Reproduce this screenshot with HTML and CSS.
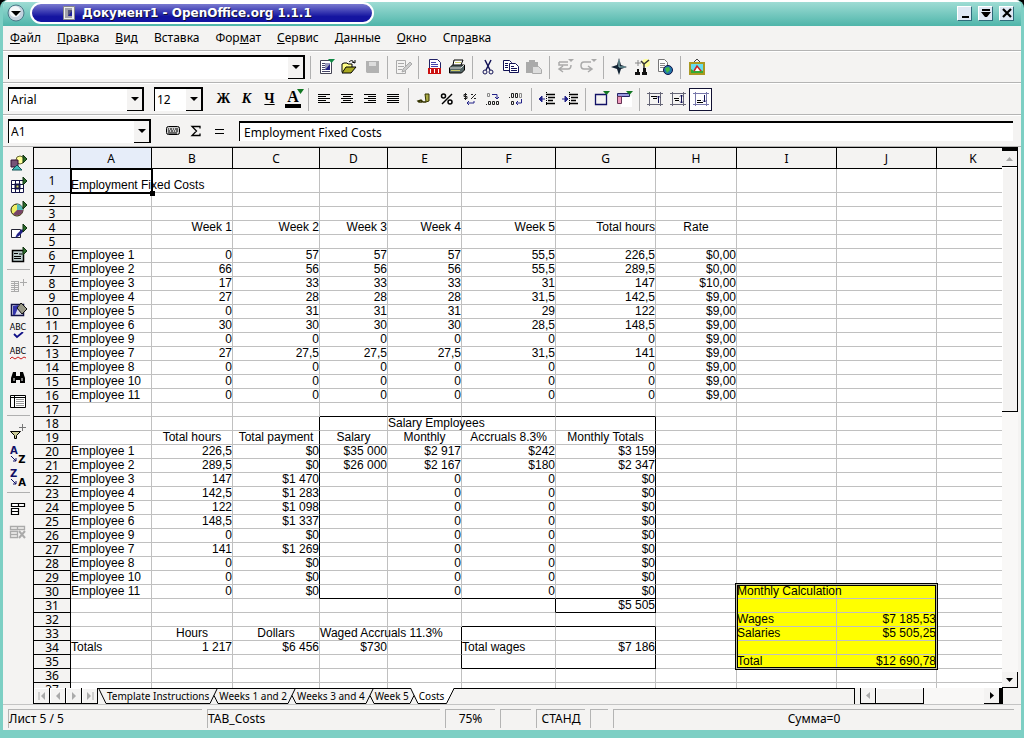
FILE: index.html
```html
<!DOCTYPE html>
<html lang="ru">
<head>
<meta charset="utf-8">
<title>Документ1 - OpenOffice.org 1.1.1</title>
<link rel="stylesheet" href="styles.css">
</head>
<body>
<div class="window">
  <header class="titlebar">
    <button class="orb" aria-label="Меню окна"><svg width="18" height="18" viewBox="0 0 18 18"><circle cx="9" cy="9" r="8" fill="#c4d2de" stroke="#4a7a88"/><circle cx="8" cy="7.500" r="5.500" fill="#f4f8fa"/><path d="M4 7h10l-5 5z" fill="#000"/></svg></button>
    <div class="caption">
      <svg width="12" height="14" viewBox="0 0 12 14"><path d="M.5.5h11v13H.5z" fill="#eee" stroke="#888"/><path d="M2 3h7M2 5h3M2 7h3M2 9h3M2 11h7" stroke="#556"/><path d="M5 4h4v6H5z" fill="#557"/><path d="M5 10l4-5v5z" fill="#229"/></svg>
      <h1>Документ1 - OpenOffice.org 1.1.1</h1>
    </div>
    <div class="winbuttons">
      <button class="winbtn" aria-label="Свернуть"><svg width="12" height="12" viewBox="0 0 12 12"><path d="M3 10h7" stroke="#000" stroke-width="2"/></svg></button>
      <button class="winbtn" aria-label="Развернуть"><svg width="12" height="12" viewBox="0 0 12 12"><path d="M2 2h8v2H2zM1 5h10l-4 5H5z"/></svg></button>
      <button class="winbtn" aria-label="Закрыть"><svg width="12" height="12" viewBox="0 0 12 12"><path d="M2 2l8 8M10 2l-8 8" stroke="#000" stroke-width="2.200"/></svg></button>
    </div>
  </header>

  <nav class="menubar">
    <button><u>Ф</u>айл</button><button><u>П</u>равка</button><button><u>В</u>ид</button><button>Вставка</button><button>Фор<u>м</u>ат</button><button><u>С</u>ервис</button><button><u>Д</u>анные</button><button><u>О</u>кно</button><button>Спр<u>а</u>вка</button>
  </nav>

  <div class="toolbar">
    <div class="combo combo-url"><select aria-label="Адрес"><option></option></select><span class="drop"></span></div>
    <i class="sep"></i>
    <button class="tool" aria-label="Создать"><svg width="18" height="18" viewBox="0 0 18 18"><path d="M3.500 2.500h11v13h-11z" fill="#fff" stroke="#445"/><path d="M5 5.500h4M5 7.500h3M5 9.500h3M5 11.500h3M5 13.500h8" stroke="#446"/><path d="M8 5h5v7H8z" fill="#99b"/><path d="M8 12l5-6v6z" fill="#228"/><path d="M11 1h7l-3.500 4z" fill="#184"/></svg></button>
    <button class="tool" aria-label="Открыть"><svg width="18" height="18" viewBox="0 0 18 18"><path d="M2 14V6l2-1h3l1 1h4v3" fill="#ff8" stroke="#000"/><path d="M2 15l4-6h10l-5 6z" fill="#aa2" stroke="#000"/><path d="M9 4c2-2 4-2 5 1M12 4l3 1V2" fill="none" stroke="#000"/></svg></button>
    <button class="tool" aria-label="Сохранить"><svg width="18" height="18" viewBox="0 0 18 18"><path d="M3 3h13v12H4l-1-1z" fill="#b2b2b2"/><path d="M6 4h7v4H6z" fill="#ddd"/></svg></button>
    <i class="sep"></i>
    <button class="tool" aria-label="Правка файла"><svg width="18" height="18" viewBox="0 0 18 18" fill="none" stroke="#aaa"><path d="M2.500 2.500h9v13h-9zM4 5.500h6M4 8.500h6M4 11.500h4"/><path d="M16 4l-7 7-1 3 3-1 7-7z" fill="#ccc"/></svg></button>
    <i class="sep"></i>
    <button class="tool" aria-label="Экспорт в PDF"><svg width="18" height="18" viewBox="0 0 18 18"><path d="M4.500 1.500h8l3 3v11h-11z" fill="#fff" stroke="#226"/><path d="M6 4.500h5M6 6.500h7M6 8.500h7" stroke="#44a"/><path d="M3 10h13v6H3z" fill="#c11"/><path d="M5.500 11v4M9.500 11v4M13.500 11v4" stroke="#fff"/></svg></button>
    <button class="tool" aria-label="Печать"><svg width="18" height="18" viewBox="0 0 18 18"><path d="M5 7l1-5h9l-2 5" fill="#fff" stroke="#000"/><path d="M1.500 10l3-3h12v5l-3 3h-12z" fill="#566" stroke="#000"/><path d="M7 4.500h6M3 12.500h9" stroke="#cc6"/><path d="M2 10h11l3-3" stroke="#ddd" fill="none"/></svg></button>
    <i class="sep"></i>
    <button class="tool" aria-label="Вырезать"><svg width="18" height="18" viewBox="0 0 18 18" fill="none" stroke="#115"><path d="M6 2l5 10M12 2L7 12" stroke-width="1.500"/><circle cx="6" cy="14" r="2"/><circle cx="12" cy="14" r="2"/></svg></button>
    <button class="tool" aria-label="Копировать"><svg width="18" height="18" viewBox="0 0 18 18" fill="#fff" stroke="#115"><path d="M1.500 2.500h6l2 2v8h-8z"/><path d="M7.500 5.500h6l3 3v6h-9z"/><path d="M3 5.500h3M3 7.500h3M3 9.500h3M9 8.500h3M9 10.500h6M9 12.500h6"/></svg></button>
    <button class="tool" aria-label="Вставить"><svg width="18" height="18" viewBox="0 0 18 18"><path d="M1 4h12v11H1zM4 2h6v3H4z" fill="#aaa"/><path d="M7.500 8.500h6l3 3v4h-9z" fill="#ddd" stroke="#aaa"/></svg></button>
    <i class="sep"></i>
    <button class="tool" aria-label="Отменить"><svg width="18" height="18" viewBox="0 0 18 18" fill="none" stroke="#aaa" stroke-width="1.500"><path d="M12 4H3M15 7q0 4-3 4H4M7 8l-4 3 4 3M3 4v3h9"/><path d="M12 1h6l-3 3z" fill="#aaa" stroke="none"/></svg></button>
    <button class="tool" aria-label="Вернуть"><svg width="18" height="18" viewBox="0 0 18 18" fill="none" stroke="#aaa" stroke-width="1.500"><path d="M12 4H5Q2 4 2 7.500T5 11h8M9 8l4 3-4 3"/><path d="M12 1h6l-3 3z" fill="#aaa" stroke="none"/></svg></button>
    <i class="sep"></i>
    <button class="tool" aria-label="Навигатор"><svg width="18" height="18" viewBox="0 0 18 18"><path d="M9 0l2 7 6 2-6 2-2 6-2-6-6-2 6-2z" fill="#123"/><path d="M9 9V2M9 9h6" stroke="#9cc"/></svg></button>
    <button class="tool" aria-label="Стилист"><svg width="18" height="18" viewBox="0 0 18 18"><circle cx="13" cy="5" r="4" fill="#ff9"/><path d="M5 2v6M2 5h6" stroke="#888"/><path d="M8 3l3 3 5-4M11 6v4" stroke="#333" stroke-width="1.500" fill="none"/><path d="M2 14h5v3H2zM9 14h5v3H9zM4 11h2v3H4zM10 10h3v4h-3z" fill="#111"/></svg></button>
    <button class="tool" aria-label="Гиперссылка"><svg width="18" height="18" viewBox="0 0 18 18"><path d="M2.500 1.500h6l3 3v9h-9z" fill="#fff" stroke="#777"/><path d="M4 5.500h5M4 7.500h5M4 9.500h4" stroke="#888"/><circle cx="12" cy="12" r="4.500" fill="#27a" stroke="#114"/><path d="M9 10l4-1 1 3-3 3z" fill="#4b4"/></svg></button>
    <i class="sep"></i>
    <button class="tool" aria-label="Галерея"><svg width="18" height="18" viewBox="0 0 18 18"><path d="M6 5l4-4 4 4" fill="none" stroke="#444"/><path d="M3 5h14v11H3z" fill="#6de" stroke="#a92" stroke-width="2"/><path d="M4 15v-4l3 2 3-4 3 3 3 1v2z" fill="#3a3"/><path d="M7 13l3-5 4 5" fill="#fff" stroke="#c22" stroke-width="1.500"/></svg></button>
  </div>

  <div class="toolbar">
    <div class="combo combo-font"><select aria-label="Шрифт"><option>Arial</option></select><span class="drop"></span></div>
    <div class="combo combo-size"><select aria-label="Кегль"><option>12</option></select><span class="drop"></span></div>
    <button class="tool glyph">Ж</button>
    <button class="tool glyph italic">К</button>
    <button class="tool glyph under">Ч</button>
    <button class="tool glyph fontcolor" aria-label="Цвет шрифта">А<svg class="corner" width="7" height="5" viewBox="0 0 7 5"><path d="M0 0h7L3.500 5z" fill="#172"/></svg></button>
    <i class="sep"></i>
    <button class="tool" aria-label="По левому краю"><svg width="18" height="18" viewBox="0 0 18 18" stroke="#000"><path d="M3 4.500h12M3 6.500h8M3 8.500h12M3 10.500h8M3 12.500h12"/></svg></button>
    <button class="tool" aria-label="По центру"><svg width="18" height="18" viewBox="0 0 18 18" stroke="#000"><path d="M3 4.500h12M5 6.500h8M3 8.500h12M5 10.500h8M3 12.500h12"/></svg></button>
    <button class="tool" aria-label="По правому краю"><svg width="18" height="18" viewBox="0 0 18 18" stroke="#000"><path d="M3 4.500h12M7 6.500h8M3 8.500h12M7 10.500h8M3 12.500h12"/></svg></button>
    <button class="tool" aria-label="По ширине"><svg width="18" height="18" viewBox="0 0 18 18" stroke="#000"><path d="M3 4.500h12M3 6.500h12M3 8.500h12M3 10.500h12M3 12.500h12"/></svg></button>
    <i class="sep"></i>
    <button class="tool" aria-label="Денежный формат"><svg width="18" height="18" viewBox="0 0 18 18"><path d="M10 4h4v7l-3 1z" fill="#aa4" stroke="#330"/><path d="M11 12H8l-2-2-3 1 1 1h3" fill="none" stroke="#330" stroke-width="1.500"/></svg></button>
    <button class="tool" aria-label="Процентный формат"><svg width="18" height="18" viewBox="0 0 18 18" fill="none" stroke="#000" stroke-width="1.500"><circle cx="5.500" cy="6" r="2"/><circle cx="12" cy="12" r="2"/><path d="M14 4L4 14"/></svg></button>
    <button class="tool" aria-label="Стандартный формат"><svg width="18" height="18" viewBox="0 0 18 18" fill="none" stroke="#222"><path d="M6 4.500H3v2h3v2H3M4.500 3v7M10 9l5-5M10 4.500h2M13 8.500h2"/><path d="M13 11v2H6M8 11l-2 2 2 2" stroke="#228"/></svg></button>
    <button class="tool" aria-label="Добавить разряд"><svg width="18" height="18" viewBox="0 0 18 18" fill="none" stroke="#222"><path d="M3.500 3.500h2v3h-2z" stroke="#888"/><path d="M8 4.500h5v4M11 7l2 2 2-2" stroke="#228"/><path d="M2 14.500h1M4.500 11.500h2v3h-2zM8.500 11.500h2v3h-2zM12.500 11.500h2v3h-2z"/></svg></button>
    <button class="tool" aria-label="Удалить разряд"><svg width="18" height="18" viewBox="0 0 18 18" fill="none" stroke="#222"><path d="M2 7.500h1M4.500 3.500h2v4h-2zM8.500 3.500h2v4h-2z"/><path d="M12.500 3.500h2v4h-2z" stroke="#888"/><path d="M4.500 11.500h2v3h-2z"/><path d="M14.500 9v4H9M11 11l-2 2 2 2" stroke="#228"/></svg></button>
    <i class="sep"></i>
    <button class="tool" aria-label="Уменьшить отступ"><svg width="18" height="18" viewBox="0 0 18 18" fill="none" stroke="#000"><path d="M8.500 2v14" stroke-dasharray="1 1"/><path d="M8 4.500h9M10 7.500h7M10 10.500h5M8 13.500h9" stroke-width="1.500"/><path d="M7 9H2M4 6L1 9l3 3z" stroke="#228" fill="#228"/></svg></button>
    <button class="tool" aria-label="Увеличить отступ"><svg width="18" height="18" viewBox="0 0 18 18" fill="none" stroke="#000"><path d="M8.500 2v14" stroke-dasharray="1 1"/><path d="M8 4.500h9M10 7.500h7M10 10.500h5M8 13.500h9" stroke-width="1.500"/><path d="M1 9h4M4 6l3 3-3 3z" stroke="#228" fill="#228"/></svg></button>
    <i class="sep"></i>
    <button class="tool" aria-label="Обрамление"><svg width="18" height="18" viewBox="0 0 18 18"><path d="M3.500 4.500h11v10h-11z" fill="none" stroke="#116" stroke-width="1.300"/><path d="M11 1h7l-3.500 4z" fill="#172"/></svg></button>
    <button class="tool" aria-label="Цвет фона"><svg width="18" height="18" viewBox="0 0 18 18"><path d="M6 6h11v11H6z" fill="#fff"/><path d="M2.500 3.500h12v3h-12z" fill="#99d" stroke="#226"/><path d="M2.500 6.500h4v7h-4z" fill="#e9b" stroke="#635"/><path d="M11 1h7l-3.500 4z" fill="#172"/></svg></button>
    <i class="sep"></i>
    <button class="tool" aria-label="По верху"><svg width="18" height="18" viewBox="0 0 18 18" fill="none" stroke="#667"><path d="M3.500 2v14M14.500 2v14M1 3.500h16M1 14.500h16"/><path d="M5 6.500h6M7 8.500h4" stroke="#000"/><path d="M12.500 13V6M11 7.500L12.500 6 14 7.500" stroke="#115"/></svg></button>
    <button class="tool" aria-label="По середине"><svg width="18" height="18" viewBox="0 0 18 18" fill="none" stroke="#667"><path d="M3.500 2v14M14.500 2v14M1 3.500h16M1 14.500h16"/><path d="M5 8.500h5M6 10.500h4" stroke="#000"/><path d="M12.500 13V5M11 6.500L12.500 5 14 6.500M11 11.500l1.500 1.500 1.500-1.500" stroke="#115"/></svg></button>
    <button class="tool pressed" aria-label="По низу" aria-pressed="true"><svg width="18" height="18" viewBox="0 0 18 18" fill="none" stroke="#77a"><path d="M3.500 2v14M14.500 2v14M1 3.500h16M1 14.500h16"/><path d="M5 10.500h4M5 12.500h6" stroke="#000"/><path d="M12.500 5v7M11 10.500l1.500 1.500 1.500-1.500" stroke="#115"/></svg></button>
  </div>

  <div class="toolbar formula">
    <div class="combo combo-name"><select aria-label="Область листа"><option>A1</option></select><span class="drop"></span></div>
    <button class="tool" aria-label="Автопилот функций"><svg width="18" height="18" viewBox="0 0 18 18"><rect x="2.500" y="4.500" width="13" height="8" rx="2" fill="#ccc" stroke="#000"/><path d="M4 7h1m1 0h2m1 0h1m1 0h3M4 9h2m1 0h2m1 0h1m1 0h2M4 11h9" stroke="#000"/></svg></button>
    <button class="tool" aria-label="Сумма"><svg width="18" height="18" viewBox="0 0 18 18" fill="none" stroke="#000" stroke-width="1.300"><path d="M13 6.500V4.500H5L9.500 9 5 13.500h8v-2"/></svg></button>
    <button class="tool" aria-label="Функция"><svg width="18" height="18" viewBox="0 0 18 18" stroke="#000"><path d="M5 7.500h9M5 11.500h9"/></svg></button>
    <input class="formula-input" aria-label="Строка ввода" value="Employment Fixed Costs">
  </div>

  <main class="workspace">
    <aside class="sidebar">
      <button class="tool" aria-label="Вставить"><svg width="18" height="18" viewBox="0 0 18 18"><circle cx="11" cy="6" r="4" fill="#ff9" stroke="#663"/><path d="M2 6h7v7H2z" fill="#757" stroke="#313"/><path d="M8 11l5 5H3z" fill="#4bb" stroke="#155"/><path class="fly" d="M14 1l4 4-4 4z"/></svg></button>
      <button class="tool" aria-label="Вставить ячейки"><svg width="18" height="18" viewBox="0 0 18 18" fill="#fff" stroke="#114"><path d="M2.500 3.500h12v12h-12zM2 7.500h13M2 11.500h13M6.500 3v13M10.500 3v13"/><path d="M6.500 7.500h4v4h-4z" fill="#dd6" stroke-width="2"/><path class="fly" d="M14 0l4 4-4 4z"/></svg></button>
      <button class="tool" aria-label="Вставить объект"><svg width="18" height="18" viewBox="0 0 18 18"><circle cx="8" cy="10" r="6" fill="#ee6" stroke="#220"/><path d="M8 10V4a6 6 0 0 1 6 6z" fill="#5bb"/><path d="M8 10h6a6 6 0 0 1-10 4z" fill="#746"/><path class="fly" d="M14 1l4 4-4 4z"/></svg></button>
      <button class="tool" aria-label="Функции рисования"><svg width="18" height="18" viewBox="0 0 18 18"><path d="M2.500 6.500h9v8h-9z" fill="#fff" stroke="#223"/><path d="M13 6l-5 5-2 4 4-2 5-5z" fill="#228"/><path class="fly" d="M14 1l4 4-4 4z"/></svg></button>
      <button class="tool" aria-label="Элементы управления"><svg width="18" height="18" viewBox="0 0 18 18"><path d="M3.500 4.500h11v11h-11z" fill="#bcc" stroke="#000" stroke-width="1.500"/><path d="M5 7.500h4M5 10.500h7M5 12.500h7M10 8h3" stroke="#000"/><path class="fly" d="M14 1l4 4-4 4z"/></svg></button>
      <i class="hsep"></i>
      <button class="tool" aria-label="Автоформат"><svg width="18" height="18" viewBox="0 0 18 18" fill="none" stroke="#aaa"><path d="M2 4.500h8M2 6.500h8M2 8.500h8M2 10.500h8M2 12.500h8M2 14.500h8M5.500 4v11M9.500 4v11M14.500 2v7M11 5.500h7"/></svg></button>
      <button class="tool" aria-label="Выбрать тему"><svg width="18" height="18" viewBox="0 0 18 18"><path d="M2.500 4.500h12v11h-12z" fill="#dde" stroke="#114" stroke-width="1.500"/><path d="M4 6l5-1v3l-3 7H4z" fill="#33a"/><path d="M8 8l4-5 6 6-5 5z" fill="#998" stroke="#111"/></svg></button>
      <button class="tool spell" aria-label="Проверка орфографии">ABC<svg width="18" height="7" viewBox="0 0 18 7"><path d="M5 2l3 3 6-5" fill="none" stroke="#118" stroke-width="1.800"/></svg></button>
      <button class="tool spell" aria-label="Автопроверка">ABC<svg width="18" height="5" viewBox="0 0 18 5"><path d="M1 3l2-2 3 2 3-2 3 2 3-2 2 1" fill="none" stroke="#c22"/></svg></button>
      <button class="tool" aria-label="Найти"><svg width="18" height="18" viewBox="0 0 18 18"><path d="M4 3h3v4h4V3h3l2 6v5h-5v-3H7v3H2V9z"/><path d="M5 9v3M13 9v3" stroke="#fff"/></svg></button>
      <button class="tool" aria-label="Источники данных"><svg width="18" height="18" viewBox="0 0 18 18"><path d="M1.500 3.500h15v12h-15z" fill="#fff" stroke="#000"/><path d="M2 5.500h14M5.500 4v11" stroke="#000"/><path d="M7 7.500h8M7 9.500h8M7 11.500h8M7 13.500h8" stroke="#999"/></svg></button>
      <i class="hsep"></i>
      <button class="tool" aria-label="Автофильтр"><svg width="18" height="18" viewBox="0 0 18 18"><path d="M1.500 8.500h10l-4 4v3h-2v-3z" fill="#cc9" stroke="#000"/><path d="M13.500 1v7M10 4.500h7" stroke="#777"/></svg></button>
      <button class="tool sort" aria-label="Сортировка по возрастанию"><b class="blue">A</b><svg width="6" height="6" viewBox="0 0 6 6"><path d="M0 0l5 5M5 2v3H2" fill="none" stroke="#116"/></svg><b>Z</b></button>
      <button class="tool sort" aria-label="Сортировка по убыванию"><b class="blue">Z</b><svg width="6" height="6" viewBox="0 0 6 6"><path d="M0 0l5 5M5 2v3H2" fill="none" stroke="#116"/></svg><b>A</b></button>
      <i class="hsep"></i>
      <button class="tool" aria-label="Группировать"><svg width="18" height="18" viewBox="0 0 18 18" fill="#fff" stroke="#000" stroke-width="1.200"><path d="M2.500 3.500h7v3h-7zM9.500 3.500h6v3h-6zM2.500 8.500h7v3h-7zM2.500 11.500h7v3h-7z"/></svg></button>
      <button class="tool" aria-label="Разгруппировать"><svg width="18" height="18" viewBox="0 0 18 18" fill="none" stroke="#aaa" stroke-width="1.300"><path d="M1.500 3.500h7v3h-7zM8.500 3.500h7v3h-7zM1.500 8.500h7v3h-7zM1.500 11.500h7v3h-7z"/><path d="M10 8l6 7M16 8l-6 7" stroke-width="2"/></svg></button>
    </aside>

    <section class="sheet">
      <div class="gridrow">
        <div class="grid">
          <table>
            <colgroup><col class="w-head"><col class="w-a"><col class="w-b"><col class="w-c"><col class="w-d"><col class="w-e"><col class="w-f"><col class="w-g"><col class="w-h"><col class="w-i"><col class="w-j"><col></colgroup>
            <thead><tr><th></th><th class="current">A</th><th>B</th><th>C</th><th>D</th><th>E</th><th>F</th><th>G</th><th>H</th><th>I</th><th>J</th><th>K</th></tr></thead>
            <tbody id="cells"></tbody>
          </table>
        </div>
        <div class="vscroll">
          <button aria-label="Вверх"><svg width="7" height="4" viewBox="0 0 7 4"><path d="M0 4h7L3.500 0z" fill="#aaa"/></svg></button>
          <div class="vthumb"></div><div class="track"></div>
          <button aria-label="Вниз"><svg width="7" height="4" viewBox="0 0 7 4"><path d="M0 0h7L3.500 4z"/></svg></button>
        </div>
      </div>
      <div class="tabrow">
        <div class="tabnav">
          <button aria-label="Первый лист"><svg width="8" height="8" viewBox="0 0 8 8"><path d="M1 0v8" stroke="#aaa"/><path d="M7 0v8L3 4z"/></svg></button>
          <button aria-label="Предыдущий лист"><svg width="8" height="8" viewBox="0 0 8 8"><path d="M6 0v8L2 4z"/></svg></button>
          <button aria-label="Следующий лист"><svg width="8" height="8" viewBox="0 0 8 8"><path d="M2 0v8l4-4z"/></svg></button>
          <button aria-label="Последний лист"><svg width="8" height="8" viewBox="0 0 8 8"><path d="M1 0v8l4-4z"/><path d="M7 0v8" stroke="#aaa"/></svg></button>
        </div>
        <div class="tabs">
          <svg width="8" height="16" viewBox="0 0 8 16"><path d="M0 .5h8M.5 0L8 15.500" /></svg>
          <button>Template Instructions</button>
          <svg width="8" height="16" viewBox="0 0 8 16"><path d="M0 .5h8M0 15.500L7.500 0M4 7.500L8 15.500"/></svg>
          <button>Weeks 1 and 2</button>
          <svg width="8" height="16" viewBox="0 0 8 16"><path d="M0 .5h8M0 15.500L7.500 0M4 7.500L8 15.500"/></svg>
          <button>Weeks 3 and 4</button>
          <svg width="8" height="16" viewBox="0 0 8 16"><path d="M0 .5h8M0 15.500L7.500 0M4 7.500L8 15.500"/></svg>
          <button>Week 5</button>
          <svg width="8" height="16" viewBox="0 0 8 16"><path d="M.5 0H8v15.500z" class="white"/><path d="M.5 0L8 15.500M0 15.500L4 7.500"/></svg>
          <button class="active">Costs</button>
          <svg width="10" height="16" viewBox="0 0 10 16"><path d="M0 0h9L1 15.500H0z" class="white"/><path d="M0 15.500h1.500L9 .5h1"/></svg>
        </div>
        <div class="hscroll">
          <button aria-label="Влево"><svg width="4" height="7" viewBox="0 0 4 7"><path d="M4 0v7L0 3.500z" fill="#aaa"/></svg></button>
          <div class="hthumb"></div><div class="track"></div>
          <button class="right" aria-label="Вправо"><svg width="4" height="7" viewBox="0 0 4 7"><path d="M0 0v7l4-3.500z"/></svg></button>
        </div>
      </div>
    </section>
  </main>

  <footer class="status">
    <span class="s1">Лист 5 / 5</span><span class="s2">TAB_Costs</span><span class="s3">75%</span><span class="s4"></span><span class="s5">СТАНД</span><span class="s6"></span><span class="s7">Сумма=0</span>
  </footer>
</div>
<script src="sheet.js"></script>
</body>
</html>
```
FILE: styles.css
```css
* { box-sizing: border-box; }
body {
  margin: 0;
  background: #000;
  font: 12px/16px "Noto Sans", "DejaVu Sans", sans-serif;
  color: #000;
}
button {
  margin: 0;
  padding: 0;
  border: 0;
  background: none;
  font: inherit;
  color: inherit;
}
svg { display: block; flex: none; }

.window {
  display: flex;
  flex-direction: column;
  height: 100vh;
  border: solid #7dcfc4;
  border-width: 0 3px 8px;
  border-radius: 8px 8px 0 0;
  background: #f4f3f2;
  overflow: hidden;
}

.titlebar {
  display: flex;
  flex: none;
  align-items: center;
  height: 26px;
  margin: 0 -3px;
  padding: 0 10px 2px 7px;
  border-top: 2px solid #fff;
  background: linear-gradient(#9edcd4, #4fb5aa);
}
.orb { margin-right: 5px; }
.caption {
  display: flex;
  align-items: center;
  gap: 7px;
  width: 344px;
  height: 22px;
  padding-left: 31px;
  border: 2px solid #fff;
  border-radius: 11px;
  background: linear-gradient(#7a7ad0, #1414a0 70%);
}
.caption h1 {
  margin: 0;
  font: bold 12px/16px "DejaVu Sans", sans-serif;
  color: #fff;
  text-shadow: 1px 1px #113;
  white-space: nowrap;
}
.winbuttons { display: flex; gap: 6px; margin-left: auto; }
.winbtn {
  display: grid;
  place-items: center;
  width: 15px;
  height: 15px;
  border: 1px solid;
  border-color: #fff #2f6c7c #2f6c7c #fff;
  background: #dfe8f4;
}

.menubar {
  display: flex;
  flex: none;
  gap: 16px;
  height: 25px;
  padding: 0 7px;
  border-bottom: 1px solid #b4b4b4;
}

.toolbar {
  display: flex;
  flex: none;
  align-items: center;
  height: 32px;
  padding: 0 5px;
  border-top: 1px solid #fff;
  border-bottom: 1px solid #b4b4b4;
}
.sep {
  width: 1px;
  height: 23px;
  margin: 0 3px 0 4px;
  background: #b0b0b0;
}
.tool {
  display: grid;
  flex: none;
  place-items: center;
  width: 23px;
  height: 23px;
}
.tool.pressed { border: 1px solid #113; background: #fff; }

.combo { position: relative; height: 24px; flex: none; }
.combo select {
  width: 100%;
  height: 24px;
  padding: 0 2px;
  border: solid #000;
  border-width: 2px 2px 0 1px;
  border-radius: 0;
  background: #fff;
  font: inherit;
  color: #000;
  appearance: none;
}
.drop {
  position: absolute;
  top: 2px;
  right: 1px;
  width: 16px;
  height: 22px;
  border: solid #000;
  border-width: 0 1px 1px 0;
  background: #f4f3f2;
  pointer-events: none;
}
.drop::after {
  content: "";
  display: block;
  margin: 8px auto 0;
  width: 0;
  border: 4px solid transparent;
  border-top-color: #000;
}
.combo-url { width: 297px; margin-right: 1px; }
.combo-font { width: 136px; margin-right: 10px; }
.combo-size { width: 49px; margin-right: 9px; }
.combo-name { width: 143px; margin-right: 10px; }

.glyph { position: relative; font: bold 14px/20px "Liberation Serif", serif; }
.italic { font-style: italic; }
.under { text-decoration: underline; }
.fontcolor { height: 18px; border-bottom: 4px solid #000; width: 16px; margin: 0 3px 0 4px; font-size: 16px; line-height: 14px; }
.corner { position: absolute; top: -1px; right: -3px; }

.formula { height: 31px; border-bottom: 0; }
.formula-input {
  flex: 1;
  min-width: 0;
  height: 20px;
  margin: 0 3px 0 9px;
  padding: 0 4px;
  border: solid #000;
  border-width: 2px 0 0 1px;
  background: #fff;
  font: inherit;
  color: #000;
}

.workspace { display: flex; flex: 1; min-height: 0; border-top: 1px solid #b4b4b4; }
.sidebar {
  display: flex;
  flex: none;
  flex-direction: column;
  align-items: center;
  width: 30px;
  padding-top: 4px;
}
.hsep { width: 23px; height: 1px; margin: 3px 0 4px; background: #b0b0b0; flex: none; }
.fly { fill: #2a6a2a; stroke: #131; stroke-width: 1; }
.spell { align-content: center; font: 8px/8px "DejaVu Sans", sans-serif; }
.sort {
  grid-template-columns: 8px 8px;
  align-content: center;
  justify-content: center;
  font: bold 10px/9px "DejaVu Sans", sans-serif;
}
.sort .blue { grid-column: 1 / 3; justify-self: start; color: #116; }

.sheet { display: flex; flex: 1; flex-direction: column; min-width: 0; border-left: 1px solid #000; margin-right: 3px; }
.gridrow { display: flex; flex: 1; min-height: 0; }
.grid { flex: 1; min-width: 0; overflow: hidden; background: #fff; }
table {
  width: calc(100% + 8px);
  table-layout: fixed;
  border-collapse: separate;
  border-spacing: 0;
}
.w-head { width: 37px; }
.w-a, .w-b, .w-h { width: 81px; }
.w-c { width: 87px; }
.w-d { width: 68px; }
.w-e { width: 74px; }
.w-f { width: 94px; }
.w-g, .w-i, .w-j { width: 100px; }
th {
  height: 14px;
  padding: 0;
  border: solid #000;
  border-width: 0 1px 1px 0;
  background: #f4f3f2;
  font-weight: normal;
  line-height: 13px;
  text-align: center;
}
thead th { height: 22px; border-top-width: 1px; }
th.current { background: #e6edf9; }
td {
  height: 14px;
  padding: 0;
  border: solid #c0c0c0;
  border-width: 0 1px 1px 0;
  font: 12px/13px "Liberation Sans", Arial, sans-serif;
  text-align: right;
  white-space: nowrap;
}
.tall > * { height: 24px; }
.tall td { vertical-align: bottom; }
td.left { text-align: left; }
td.center { text-align: center; }
td.yellow { background: #ff0; }
td.line-right { border-right-color: #000; }
td.line-bottom { border-bottom-color: #000; }
td.anchor { position: relative; }
.frame {
  position: absolute;
  top: -2px;
  left: -2px;
  width: 203px;
  height: 87px;
  border: 1px solid #000;
  box-shadow: inset 0 0 0 1px #b8b8a0, inset 0 0 0 2px #000;
}
.cursor {
  position: absolute;
  top: -1px;
  left: -1px;
  right: -2px;
  bottom: -2px;
  border: 2px solid #000;
}
.cursor::after {
  content: "";
  position: absolute;
  right: -4px;
  bottom: -4px;
  width: 5px;
  height: 5px;
  background: #000;
}

.vscroll {
  display: flex;
  flex: none;
  flex-direction: column;
  width: 16px;
  border-top: 4px solid #000;
}
.vscroll button {
  display: grid;
  place-items: center;
  height: 16px;
  border: solid #000;
  border-width: 0 1px 1px 0;
}
.vthumb { flex: 0 1 245px; border: solid #000; border-width: 0 1px 1px 0; box-shadow: inset 1px 1px #fff; }
.track { flex: 1; background: #f9f8f7; }

.tabrow { display: flex; flex: none; height: 16px; }
.tabnav { display: flex; border-bottom: 1px solid #000; }
.tabnav button {
  display: grid;
  place-items: center;
  width: 16px;
  border-right: 1px solid #000;
  box-shadow: inset 1px 1px #fff;
}
.tabnav path { fill: #aaa; }
.tabs { display: flex; flex: 1; background: linear-gradient(#000, #000) 0 0 / 100% 1px no-repeat; }
.tabs button {
  padding: 0 1px;
  border: solid #000;
  border-width: 1px 0;
  font-size: 10px;
  line-height: 14px;
  white-space: nowrap;
}
.tabs .active { border-top-color: #fff; background: #fff; }
.tabs path { fill: none; stroke: #000; }
.tabs .white { fill: #fff; stroke: none; }
.hscroll {
  display: flex;
  flex: none;
  width: 149px;
  margin-right: 15px;
  padding-left: 5px;
  border-left: 1px solid #000;
  border-right: 3px solid #000;
}
.hscroll button {
  display: grid;
  place-items: center;
  width: 16px;
  border: solid #000;
  border-width: 0 1px 1px;
}
.hscroll .right { border-left-width: 0; }
.hthumb { width: 48px; border: solid #000; border-width: 0 1px 1px 0; box-shadow: inset 1px 1px #fff; }

.status {
  display: flex;
  flex: none;
  gap: 5px;
  height: 26px;
  padding: 4px 7px 2px 5px;
  border-top: 1px solid #c4c4c4;
}
.status span {
  flex: none;
  border: solid #b4b4b4;
  border-width: 1px 0 0 1px;
  line-height: 18px;
  text-align: center;
  white-space: nowrap;
}
.status .s1 { width: 194px; text-align: left; }
.status .s2 { width: 233px; text-align: left; }
.status .s3 { width: 50px; }
.status .s4 { width: 31px; }
.status .s5 { width: 49px; }
.status .s6 { width: 18px; }
.status .s7 { flex: 1; }
```
FILE: sheet.js
```js
// Cell values per row, columns A..K separated by "|".
// A leading "^" centres a value, a leading "<" aligns it left.
const rows = {
  1: "Employment Fixed Costs",
  4: "|Week 1|Week 2|Week 3|Week 4|Week 5|Total hours|^Rate",
  6: "Employee 1|0|57|57|57|55,5|226,5|$0,00",
  7: "Employee 2|66|56|56|56|55,5|289,5|$0,00",
  8: "Employee 3|17|33|33|33|31|147|$10,00",
  9: "Employee 4|27|28|28|28|31,5|142,5|$9,00",
  10: "Employee 5|0|31|31|31|29|122|$9,00",
  11: "Employee 6|30|30|30|30|28,5|148,5|$9,00",
  12: "Employee 9|0|0|0|0|0|0|$9,00",
  13: "Employee 7|27|27,5|27,5|27,5|31,5|141|$9,00",
  14: "Employee 8|0|0|0|0|0|0|$9,00",
  15: "Employee 10|0|0|0|0|0|0|$9,00",
  16: "Employee 11|0|0|0|0|0|0|$9,00",
  18: "||||<Salary Employees",
  19: "|^Total hours|^Total payment|^Salary|^Monthly|^Accruals 8.3%|^Monthly Totals",
  20: "Employee 1|226,5|$0|$35 000|$2 917|$242|$3 159",
  21: "Employee 2|289,5|$0|$26 000|$2 167|$180|$2 347",
  22: "Employee 3|147|$1 470||0|0|$0",
  23: "Employee 4|142,5|$1 283||0|0|$0",
  24: "Employee 5|122|$1 098||0|0|$0",
  25: "Employee 6|148,5|$1 337||0|0|$0",
  26: "Employee 9|0|$0||0|0|$0",
  27: "Employee 7|141|$1 269||0|0|$0",
  28: "Employee 8|0|$0||0|0|$0",
  29: "Employee 10|0|$0||0|0|$0",
  30: "Employee 11|0|$0||0|0|$0||<Monthly Calculation",
  31: "||||||$5 505",
  32: "||||||||<Wages|$7 185,53",
  33: "|^Hours|^Dollars|<Waged Accruals 11.3%|||||<Salaries|$5 505,25",
  34: "Totals|1 217|$6 456|$730||<Total wages|$7 186",
  35: "||||||||<Total|$12 690,78"
};

// Outlined ranges: [first column, first row, last column, last row].
const outlines = [[3, 18, 6, 30], [6, 31, 6, 31], [5, 33, 6, 35]];

const body = document.getElementById("cells");
for (let r = 1; r <= 37; r++) {
  const tr = body.insertRow();
  if (r === 1) tr.className = "tall";
  const head = document.createElement("th");
  head.textContent = r;
  if (r === 1) head.className = "current";
  tr.append(head);
  const values = (rows[r] || "").split("|");
  for (let c = 0; c < 11; c++) {
    const td = tr.insertCell();
    const value = values[c] || "";
    td.textContent = value.replace(/^[\^<]/, "");
    if (c === 0 || value[0] === "<") td.classList.add("left");
    if (value[0] === "^") td.classList.add("center");
    if (r >= 30 && r <= 35 && (c === 8 || c === 9)) td.classList.add("yellow");
    for (const [c1, r1, c2, r2] of outlines) {
      if (r >= r1 && r <= r2 && (c === c1 - 1 || c === c2)) td.classList.add("line-right");
      if (c >= c1 && c <= c2 && (r === r1 - 1 || r === r2)) td.classList.add("line-bottom");
    }
    const overlay = r === 1 && c === 0 ? "cursor" : r === 30 && c === 8 ? "frame" : "";
    if (overlay) {
      td.classList.add("anchor");
      const mark = document.createElement("span");
      mark.className = overlay;
      td.append(mark);
    }
  }
}
```
